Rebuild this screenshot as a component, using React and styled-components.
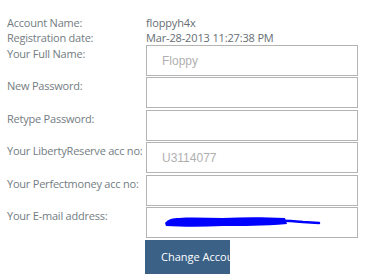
import React from "react";
import styled, { createGlobalStyle } from "styled-components";

const Global = createGlobalStyle`
  html, body { margin: 0; padding: 0; background: #fff; }
  body { font-family: "Open Sans", "DejaVu Sans", sans-serif; }
`;

const Page = styled.div`
  padding: 15px 0 0 7px;
  width: 377px;
`;

const Form = styled.div`
  display: grid;
  grid-template-columns: 139px 212px;
`;

const Label = styled.div`
  font-size: 11px;
  letter-spacing: -0.22px;
  line-height: 15px;
  color: #737c82;
  padding-top: ${(p) => (p.$field ? "1px" : "0")};
  white-space: nowrap;
`;

const Value = styled.div`
  font-size: 11px;
  letter-spacing: -0.15px;
  line-height: 15px;
  color: #666e73;
  white-space: nowrap;
`;

const Field = styled.div`
  box-sizing: border-box;
  height: 31px;
  margin-bottom: 1.4px;
  border: 1px solid #b4b4b4;
  background: #fff;
  display: flex;
  align-items: center;
  padding-left: 15px;
  font-family: "Liberation Sans", Arial, sans-serif;
  font-size: 12px;
  color: #b0b0b0;
`;

const Button = styled.div`
  margin-top: 0.4px;
  margin-left: -1px;
  width: 85px;
  height: 34px;
  box-sizing: border-box;
  background: #3b6187;
  color: #fff;
  font-size: 11px;
  display: flex;
  align-items: center;
  padding-left: 16px;
  overflow: hidden;
  white-space: nowrap;
`;

const Scribble = () => (
  <svg width="160" height="16" viewBox="0 0 160 16" style={{ marginLeft: 1 }}>
    <path
      d="M2 9 C5 5 10 4 16 4 C30 3 45 4 60 4 C80 3 100 3 122 4 L124 10 C100 12 80 12 60 12 C40 13 20 13 3 12 Z"
      fill="#0000ff"
    />
    <path
      d="M110 7 C120 6 130 7 140 8 L156 9"
      stroke="#0000ff"
      strokeWidth="2.5"
      fill="none"
      strokeLinecap="round"
    />
  </svg>
);

const fields = [
  { label: "Your Full Name:", value: "Floppy" },
  { label: "New Password:", value: "" },
  { label: "Retype Password:", value: "" },
  { label: "Your LibertyReserve acc no:", value: "U3114077" },
  { label: "Your Perfectmoney acc no:", value: "" },
  { label: "Your E-mail address:", value: null },
];

export default function App() {
  return (
    <>
      <Global />
      <Page>
        <Form>
          <Label>Account Name:</Label>
          <Value>floppyh4x</Value>
          <Label>Registration date:</Label>
          <Value>Mar-28-2013 11:27:38 PM</Value>
          {fields.map((f) => (
            <React.Fragment key={f.label}>
              <Label $field>{f.label}</Label>
              <Field>{f.value === null ? <Scribble /> : f.value}</Field>
            </React.Fragment>
          ))}
          <div />
          <Button>Change Account</Button>
        </Form>
      </Page>
    </>
  );
}
